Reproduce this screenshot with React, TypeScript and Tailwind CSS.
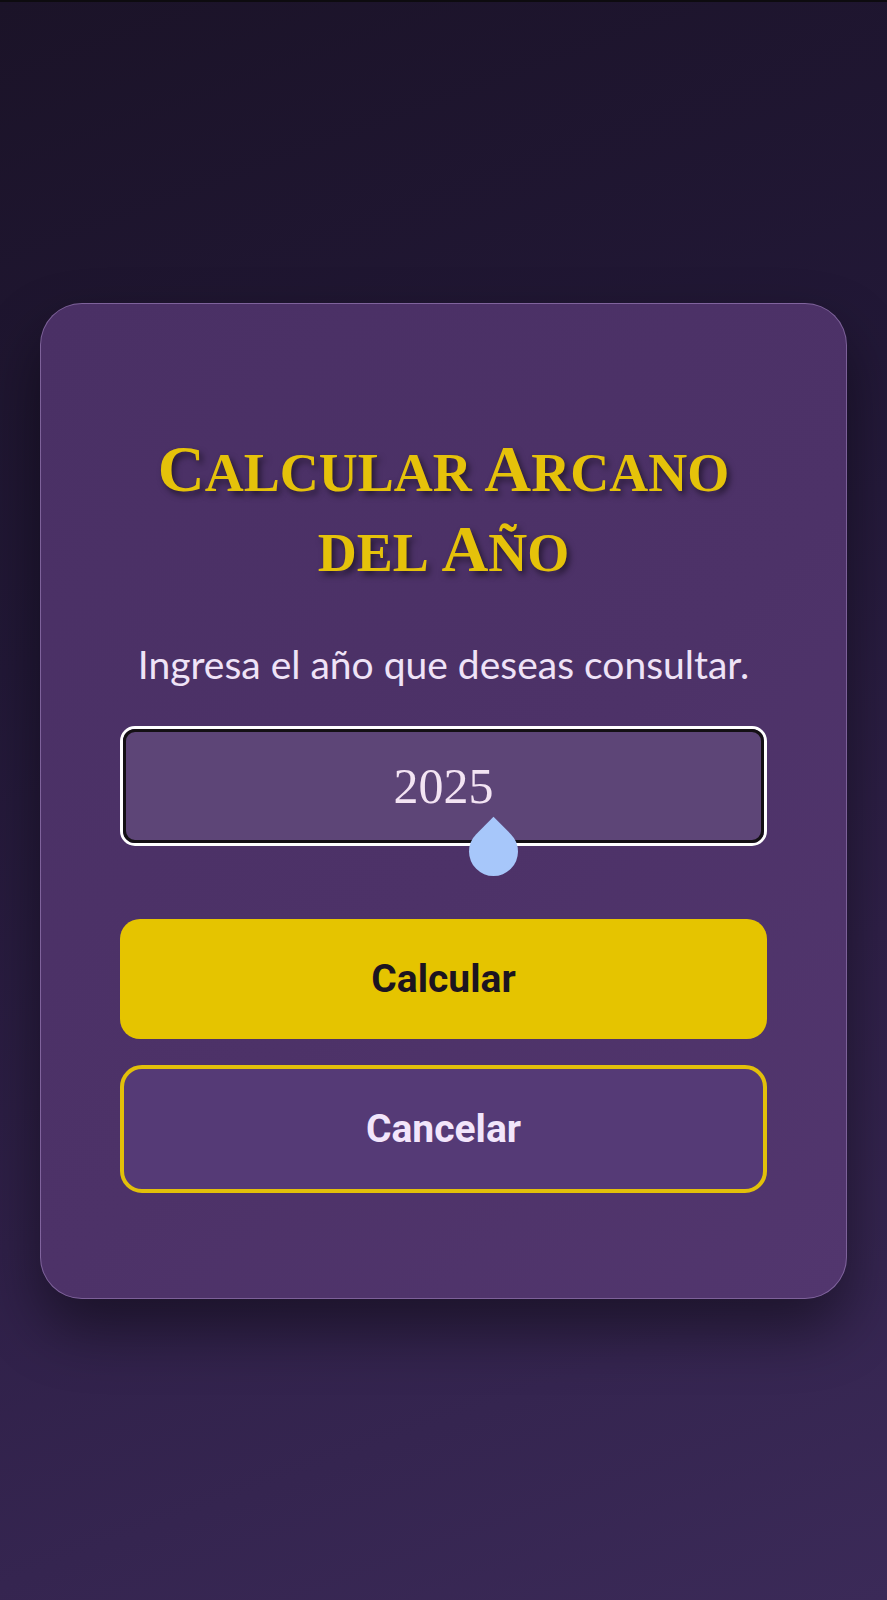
import React from "react";

export default function App() {
  return (
    <div className="min-h-screen w-full flex flex-col bg-[linear-gradient(160deg,#1b1328_0%,#221837_35%,#2f2048_65%,#3b2a58_100%)]">
      <div className="h-[2px] w-full bg-[#0d0b0f]" />
      <div className="flex-1 flex items-center justify-center px-[40px]">
        <div className="w-full rounded-[42px] border border-[rgba(200,170,230,0.4)] bg-[linear-gradient(135deg,#4a3065_0%,#4d3268_55%,#52366e_100%)] shadow-[0_30px_60px_rgba(0,0,0,0.45)] px-[79px] pt-[125px] pb-[105px] flex flex-col items-stretch">
          <h1
            className="text-center text-[65px] leading-[80px] font-bold text-[#e5c20a] [text-shadow:3px_4px_6px_rgba(0,0,0,0.5)]"
            style={{ fontFamily: '"Liberation Serif", "Times New Roman", serif' }}
          >
            <span>
              C<span className="uppercase text-[54px] leading-none">alcular</span>
            </span>{" "}
            <span>
              A<span className="uppercase text-[54px] leading-none">rcano</span>
            </span>{" "}
            <span className="uppercase text-[54px] leading-none">del</span>{" "}
            <span>
              A<span className="uppercase text-[54px] leading-none">ño</span>
            </span>
          </h1>
          <p
            className="mt-[51px] text-center text-[39px] leading-[48px] text-[#efe3f7]"
            style={{ fontFamily: 'Lato, "Noto Sans", sans-serif' }}
          >
            Ingresa el año que deseas consultar.
          </p>
          <div className="relative mt-[38px] h-[120px] rounded-[15px] border-[3px] border-white">
            <div
              className="h-full w-full rounded-[12px] border-[3px] border-[#141014] bg-[#5d4577] flex items-center justify-center text-[50px] text-[#f3e4f3]"
              style={{ fontFamily: '"Liberation Serif", "Times New Roman", serif' }}
            >
              2025
            </div>
            <div className="absolute left-[346px] top-[98px] h-[49px] w-[49px] rotate-45 rounded-[0_50%_50%_50%] bg-[#a7c7fa]" />
          </div>
          <button
            className="mt-[73px] h-[120px] w-full rounded-[20px] bg-[#e5c400] text-[39px] font-bold text-[#1c1420]"
            style={{ fontFamily: 'Roboto, "Noto Sans", sans-serif' }}
          >
            Calcular
          </button>
          <button
            className="mt-[26px] h-[128px] w-full rounded-[22px] border-[4px] border-[#e2c00a] bg-[#553a76] text-[39px] font-bold text-[#f2e5fb]"
            style={{ fontFamily: 'Roboto, "Noto Sans", sans-serif' }}
          >
            Cancelar
          </button>
        </div>
      </div>
    </div>
  );
}
